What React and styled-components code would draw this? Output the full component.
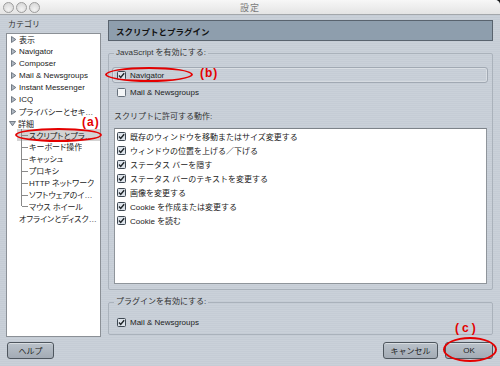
import React from 'react';
import styled, { createGlobalStyle } from 'styled-components';

const GlobalStyle = createGlobalStyle`
  html, body {
    margin: 0;
    padding: 0;
    background: #1b1b1b;
  }
  body {
    font-family: 'Liberation Sans', 'Noto Sans CJK JP', sans-serif;
    font-size: 8px;
    color: #222;
  }
`;

const Window = styled.div`
  position: relative;
  width: 500px;
  height: 366px;
  display: flex;
  flex-direction: column;
  overflow: hidden;
  border-top-right-radius: 5px;
  background: repeating-linear-gradient(#cad1d9 0 1px, #c5ccd5 1px 2px);
`;

const TitleBar = styled.div`
  flex: none;
  height: 14px;
  display: grid;
  grid-template-columns: 1fr auto 1fr;
  align-items: center;
  background: linear-gradient(#f7f7f7, #e4e4e4);
  border-bottom: 1px solid #a3a7ab;
`;

const Lights = styled.div`
  display: flex;
  gap: 2px;
  padding-left: 3px;
`;

const Light = styled.span`
  width: 9px;
  height: 9px;
  border-radius: 50%;
  border: 1px solid #9c9c9c;
  background: radial-gradient(circle at 50% 70%, #f2f2f2, #d2d2d2);
`;

const Title = styled.div`
  font-size: 9px;
  color: #7a7a7a;
  letter-spacing: 1px;
`;

const Body = styled.div`
  flex: 1;
  display: flex;
  flex-direction: column;
  padding: 5px 7px 0 6px;
`;

const Main = styled.div`
  height: 317px;
  display: flex;
  gap: 7px;
`;

const Sidebar = styled.div`
  width: 95px;
  display: flex;
  flex-direction: column;
  gap: 4px;
`;

const SideLabel = styled.div`
  line-height: 9px;
  padding-left: 2px;
  color: #333;
`;

const TreeBox = styled.div`
  flex: 1;
  background: #fff;
  border: 1px solid #8b9096;
  font-feature-settings: 'palt';
`;

const TreeRow = styled.div`
  height: 11.9px;
  display: flex;
  align-items: center;
  gap: ${(p) => (p.$branch ? 0 : 2)}px;
  padding: 0 1px 0 ${(p) => p.$indent}px;
  margin-left: ${(p) => p.$offset || 0}px;
  background: ${(p) => (p.$selected ? '#d3d3d3' : 'transparent')};
  white-space: nowrap;
`;

const TreeText = styled.span`
  overflow: hidden;
  text-overflow: ellipsis;
  min-width: 0;
`;

const Twisty = styled.svg`
  flex: none;
  width: 7px;
  height: 7px;
`;

const Branch = styled.span`
  flex: none;
  position: relative;
  width: 8px;
  height: 100%;
  border-left: 1px solid #8a8a8a;
  box-sizing: border-box;
  ${(p) => p.$last && 'height: 50%; align-self: flex-start;'}
  &::after {
    content: '';
    position: absolute;
    left: 0;
    top: ${(p) => (p.$last ? '100%' : '50%')};
    width: 6px;
    border-top: 1px solid #8a8a8a;
  }
`;

const Pane = styled.div`
  width: 385px;
  display: flex;
  flex-direction: column;
`;

const PaneHeader = styled.div`
  height: 19px;
  display: flex;
  align-items: center;
  padding-left: 7px;
  background: #8e9ead;
  border: 1px solid #59636e;
  font-weight: bold;
  font-size: 8.5px;
  color: #111;
`;

const Group = styled.fieldset`
  margin: ${(p) => p.$gap}px 0 0;
  padding: ${(p) => p.$top}px 5px 5px 5px;
  border: 1px solid #aab2bb;
  border-radius: 2px;
  min-width: 0;
`;

const Legend = styled.legend`
  padding: 0 2px;
  line-height: 10px;
  color: #333;
`;

const HighlightFrame = styled.div`
  height: 14px;
  margin: 0 -1px 0 -2px;
  padding-left: 4px;
  display: flex;
  align-items: center;
  gap: 4px;
  border: 1px solid #a1a9b3;
  border-radius: 3px;
  box-shadow: inset 0 0 0 1px rgba(255, 255, 255, 0.3);
`;

const CheckRow = styled.div`
  height: ${(p) => p.$h || 12}px;
  margin-top: ${(p) => p.$mt || 0}px;
  padding-left: ${(p) => p.$pl ?? 3}px;
  display: flex;
  align-items: center;
  gap: 4px;
  white-space: nowrap;
`;

const SubLabel = styled.div`
  margin-top: 14px;
  line-height: 10px;
  color: #333;
`;

const ActionList = styled.div`
  margin-top: 6px;
  height: 154px;
  background: #fff;
  border: 1px solid #8f959b;
  border-top-color: #7d8389;
`;

const ButtonBar = styled.div`
  margin-top: 5px;
  display: flex;
  gap: 7px;
`;

const Button = styled.button`
  height: 17px;
  width: ${(p) => p.$w}px;
  margin-left: ${(p) => p.$ml || 0}px;
  padding: 0;
  font: inherit;
  color: #222;
  border: 1px solid #4e565e;
  border-radius: 3px;
  background: linear-gradient(#bac2ca, #a3abb5);
  box-shadow: inset 0 1px 0 rgba(255, 255, 255, 0.45);
`;

const Spacer = styled.div`
  flex: 1;
`;

const Ring = styled.div`
  position: absolute;
  left: ${(p) => p.$x}px;
  top: ${(p) => p.$y}px;
  width: ${(p) => p.$w}px;
  height: ${(p) => p.$h}px;
  border: 2px solid #e40000;
  border-radius: 50%;
  box-sizing: border-box;
  pointer-events: none;
`;

const Mark = styled.div`
  position: absolute;
  left: ${(p) => p.$x}px;
  top: ${(p) => p.$y}px;
  color: #e40000;
  font-weight: bold;
  font-size: 12px;
  line-height: 12px;
  letter-spacing: ${(p) => p.$ls || 1}px;
`;

const CheckBox = ({ checked }) => (
  <svg width="9" height="9" viewBox="0 0 9 9" style={{ flex: 'none' }}>
    <rect
      x="0.5"
      y="0.5"
      width="8"
      height="8"
      rx="1"
      fill={checked ? '#dde3ea' : '#f3f5f7'}
      stroke={checked ? '#3d4751' : '#66707b'}
    />
    {checked && (
      <path d="M2 4.6 L3.7 6.4 L7.2 2.2" fill="none" stroke="#1e2428" strokeWidth="1.4" />
    )}
  </svg>
);

const TwistyIcon = ({ open }) => (
  <Twisty viewBox="0 0 7 7">
    {open ? (
      <polygon points="0.5,1.5 6.5,1.5 3.5,5.8" fill="#aeb6c0" stroke="#5b6570" strokeWidth="0.8" />
    ) : (
      <polygon points="1.5,0.5 5.8,3.5 1.5,6.5" fill="#aeb6c0" stroke="#5b6570" strokeWidth="0.8" />
    )}
  </Twisty>
);

const topItems = [
  '表示',
  'Navigator',
  'Composer',
  'Mail & Newsgroups',
  'Instant Messenger',
  'ICQ',
  'プライバシーとセキュリティ',
];

const subItems = [
  'スクリプトとプラグイン',
  'キーボード操作',
  'キャッシュ',
  'プロキシ',
  'HTTP ネットワーク',
  'ソフトウェアのインストール',
  'マウス ホイール',
];

const actions = [
  '既存のウィンドウを移動またはサイズ変更する',
  'ウィンドウの位置を上げる／下げる',
  'ステータス バーを隠す',
  'ステータス バーのテキストを変更する',
  '画像を変更する',
  'Cookie を作成または変更する',
  'Cookie を読む',
];

export default function App() {
  return (
    <>
      <GlobalStyle />
      <Window>
        <TitleBar>
          <Lights>
            <Light />
            <Light />
            <Light />
          </Lights>
          <Title>設定</Title>
          <div />
        </TitleBar>
        <Body>
          <Main>
            <Sidebar>
              <SideLabel>カテゴリ</SideLabel>
              <TreeBox>
                {topItems.map((t) => (
                  <TreeRow key={t} $indent={3}>
                    <TwistyIcon />
                    <TreeText>{t}</TreeText>
                  </TreeRow>
                ))}
                <TreeRow $indent={2}>
                  <TwistyIcon open />
                  <TreeText>詳細</TreeText>
                </TreeRow>
                {subItems.map((t, i) => (
                  <TreeRow
                    key={t}
                    $indent={4}
                    $offset={10}
                    $branch
                    $selected={i === 0}
                  >
                    <Branch $last={i === subItems.length - 1} />
                    <TreeText>{t}</TreeText>
                  </TreeRow>
                ))}
                <TreeRow $indent={12}>
                  <TreeText>オフラインとディスク領域</TreeText>
                </TreeRow>
              </TreeBox>
            </Sidebar>
            <Pane>
              <PaneHeader>スクリプトとプラグイン</PaneHeader>
              <Group $gap={7} $top={9}>
                <Legend>JavaScript を有効にする:</Legend>
                <HighlightFrame>
                  <CheckBox checked />
                  <span>Navigator</span>
                </HighlightFrame>
                <CheckRow $mt={3}>
                  <CheckBox />
                  <span>Mail &amp; Newsgroups</span>
                </CheckRow>
                <SubLabel>スクリプトに許可する動作:</SubLabel>
                <ActionList>
                  {actions.map((a) => (
                    <CheckRow key={a} $h={14} $pl={2}>
                      <CheckBox checked />
                      <span>{a}</span>
                    </CheckRow>
                  ))}
                </ActionList>
              </Group>
              <Group $gap={7} $top={8}>
                <Legend>プラグインを有効にする:</Legend>
                <CheckRow $h={14}>
                  <CheckBox checked />
                  <span>Mail &amp; Newsgroups</span>
                </CheckRow>
              </Group>
            </Pane>
          </Main>
          <ButtonBar>
            <Button $w={47} $ml={1}>ヘルプ</Button>
            <Spacer />
            <Button $w={55}>キャンセル</Button>
            <Button $w={48}>OK</Button>
          </ButtonBar>
        </Body>
        <Ring $x={15} $y={128} $w={87} $h={14} />
        <Mark $x={82} $y={116}>(a)</Mark>
        <Ring $x={105} $y={67} $w={88} $h={15} />
        <Mark $x={200} $y={67}>(b)</Mark>
        <Ring $x={443} $y={337} $w={54} $h={25} />
        <Mark $x={455} $y={322} $ls={3}>(c)</Mark>
      </Window>
    </>
  );
}
